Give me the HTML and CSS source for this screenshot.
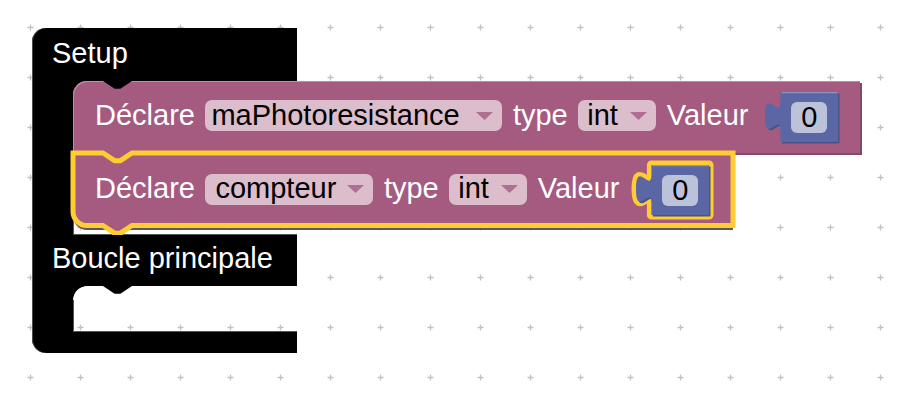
FILE: index.html
```html
<!DOCTYPE html>
<html lang="fr">
<head>
<meta charset="utf-8">
<title>Blocs</title>
<link rel="stylesheet" href="styles.css">
</head>
<body>
<div class="workspace">
  <div class="cblock">
    <div class="chead chead--setup">Setup</div>
    <div class="cinput">
      <div class="spine"></div>
      <div class="stack">
        <div class="block block--first">
          <span class="label">Déclare</span>
          <span class="dropdown dropdown--long"><span>maPhotoresistance</span><svg class="arrow" viewBox="0 0 17 8"><path d="M0 0H17L8.5 8Z"/></svg></span>
          <span class="label">type</span>
          <span class="dropdown dropdown--int"><span>int</span><svg class="arrow" viewBox="0 0 17 8"><path d="M0 0H17L8.5 8Z"/></svg></span>
          <span class="label">Valeur</span>
          <span class="value value--first">
            <svg class="value__shape" viewBox="0 0 75 52">
              <path class="value__dark" transform="translate(1.5 1.5)" d="M15.4 0H73V50H15.4V38.6c0 -19.3 -15.4 15.4 -15.4 -14.5s15.4 4.8 15.4 -14.5Z"/>
              <path class="value__main" d="M15.4 0H73V50H15.4V38.6c0 -19.3 -15.4 15.4 -15.4 -14.5s15.4 4.8 15.4 -14.5Z"/>
              <path class="value__light" d="M16.5 0.6H72.4"/>
            </svg>
            <span class="value__field">0</span>
          </span>
        </div>
        <div class="block block--selected">
          <svg class="selection" viewBox="0 0 660 73">
            <path class="selection__tab" d="M30 72.5l11.6 7.7h5.8l11.6 -7.7Z"/>
            <path class="selection__outline" d="M0 0H30l11.6 7.7h5.8L59 0H660V72.5H59l-11.6 7.7h-5.8L30 72.5H14A14 14 0 0 1 0 58.5Z"/>
          </svg>
          <span class="label">Déclare</span>
          <span class="dropdown dropdown--mid"><span>compteur</span><svg class="arrow" viewBox="0 0 17 8"><path d="M0 0H17L8.5 8Z"/></svg></span>
          <span class="label">type</span>
          <span class="dropdown dropdown--int"><span>int</span><svg class="arrow" viewBox="0 0 17 8"><path d="M0 0H17L8.5 8Z"/></svg></span>
          <span class="label">Valeur</span>
          <span class="value value--selected">
            <svg class="value__shape" viewBox="0 0 75 52">
              <path class="value__socket" d="M15.4 0H73V50H15.4V38.6c0 -19.3 -15.4 15.4 -15.4 -14.5s15.4 4.8 15.4 -14.5Z"/>
              <path class="value__dark" transform="translate(1.5 1.5)" d="M15.4 0H73V50H15.4V38.6c0 -19.3 -15.4 15.4 -15.4 -14.5s15.4 4.8 15.4 -14.5Z"/>
              <path class="value__main" d="M15.4 0H73V50H15.4V38.6c0 -19.3 -15.4 15.4 -15.4 -14.5s15.4 4.8 15.4 -14.5Z"/>
              <path class="value__light" d="M16.5 0.6H72.4"/>
            </svg>
            <span class="value__field">0</span>
          </span>
        </div>
      </div>
    </div>
    <div class="chead chead--loop">Boucle principale</div>
    <div class="cinput">
      <div class="spine"></div>
      <div class="slot"></div>
    </div>
    <div class="cfoot"></div>
  </div>
</div>
</body>
</html>
```
FILE: styles.css
```css
html, body {
  margin: 0;
  padding: 0;
  background: #fff;
}

body {
  font-family: "Liberation Sans", Arial, Helvetica, sans-serif;
}

.workspace {
  position: relative;
  width: 904px;
  height: 414px;
  overflow: hidden;
  background-color: #fff;
  background-image: url("data:image/svg+xml,%3Csvg xmlns='http://www.w3.org/2000/svg' width='50' height='50'%3E%3Cpath d='M22.5 25.5h6M25.5 22.5v6' stroke='%23c2c2c2' stroke-width='1.3'/%3E%3C/svg%3E");
  background-size: 50px 50px;
  background-position: 5px 1.5px;
}

/* ---------- C-shaped container block ---------- */
.cblock {
  position: absolute;
  left: 32px;
  top: 28px;
  width: 265px;
  display: flex;
  flex-direction: column;
}

.chead {
  position: relative;
  z-index: 2;
  box-sizing: border-box;
  background: #000;
  color: #fff;
  font-size: 29px;
  line-height: 33px;
  padding-left: 20px;
  white-space: nowrap;
  box-shadow: inset 1px 0 0 #4d4d4d;
}

.chead::after {
  content: "";
  position: absolute;
  left: 71px;
  top: 100%;
  width: 29px;
  height: 7.7px;
  background: #000;
  clip-path: polygon(0 0, 100% 0, 60% 100%, 40% 100%);
}

.chead--setup {
  height: 53px;
  padding-top: 8.5px;
  border-top-left-radius: 14px;
}

.chead--loop {
  height: 51px;
  padding-top: 6.5px;
}

.cinput {
  display: flex;
}

.spine {
  flex: none;
  width: 41px;
  background: #000;
  box-shadow: inset 1px 0 0 #4d4d4d;
}

.stack,
.slot {
  flex: 1;
  min-width: 0;
  background:
    radial-gradient(circle at 14px 14px, transparent 13.5px, #000 14.2px) left top / 14px 14px no-repeat,
    linear-gradient(#555, #555) left bottom / 100% 1px no-repeat,
    linear-gradient(#555, #555) left bottom / 1px calc(100% - 14px) no-repeat;
}

.stack {
  height: 154px;
  display: flex;
  flex-direction: column;
  align-items: flex-start;
}

.slot {
  height: 46px;
}

.cfoot {
  height: 21px;
  background: #000;
  border-bottom-left-radius: 14px;
  box-shadow: inset 1px 0 0 #4d4d4d;
}

/* ---------- statement blocks ---------- */
.block {
  position: relative;
  flex: none;
  box-sizing: border-box;
  display: flex;
  align-items: center;
  gap: 10.5px;
  padding-left: 22px;
  background: #a55b80;
  color: #fff;
  font-size: 29px;
  line-height: 32px;
  white-space: nowrap;
}

.block--first {
  width: 787px;
  height: 72px;
  padding-bottom: 3px;
  border-top-left-radius: 14px;
  box-shadow: inset 1px 1px 0 #c08ca6, 2px 2px 0 #844966;
}

.block--selected {
  width: 660px;
  height: 72.5px;
  border-bottom-left-radius: 14px;
  box-shadow: 0 4px 0 #5a5a5a;
}

.selection {
  position: absolute;
  left: 0;
  top: 0;
  width: 660px;
  height: 73px;
  overflow: visible;
  pointer-events: none;
}

.selection__tab {
  fill: #a55b80;
}

.selection__outline {
  fill: none;
  stroke: #fc3;
  stroke-width: 5;
}

.label {
  padding-bottom: 2px;
}

/* ---------- dropdown fields ---------- */
.dropdown {
  display: inline-flex;
  align-items: center;
  justify-content: space-between;
  box-sizing: border-box;
  height: 31px;
  padding: 0 9px 2px 6px;
  border-radius: 7px;
  background: rgba(255, 255, 255, 0.6);
  color: #000;
}

.dropdown--long {
  width: 297px;
}

.dropdown--mid {
  width: 168px;
  padding-left: 10px;
}

.dropdown--int {
  width: 78px;
  padding-left: 9px;
}

.arrow {
  width: 17px;
  height: 8px;
  margin-top: 2px;
  fill: #b06e92;
}

/* ---------- value (number) blocks ---------- */
.value {
  position: relative;
  flex: none;
  box-sizing: border-box;
  width: 75px;
  height: 52px;
  margin-left: 6px;
  padding: 10px 0 0 26px;
  display: flex;
  align-items: flex-start;
}

.value--first {
  margin-top: 5px;
}

.value--selected {
  margin-top: 2.5px;
}

.value__shape {
  position: absolute;
  left: 0;
  top: 0;
  width: 75px;
  height: 52px;
  overflow: visible;
}

.value__socket {
  fill: #fc3;
  stroke: #fc3;
  stroke-width: 9;
  stroke-linejoin: round;
}

.value__dark {
  fill: #495284;
}

.value__main {
  fill: #5b67a5;
}

.value__light {
  fill: none;
  stroke: #8c95c0;
  stroke-width: 1.2;
}

.value__field {
  position: relative;
  width: 36.5px;
  height: 31px;
  border-radius: 6px;
  background: #bdc2db;
  color: #000;
  font-size: 29px;
  line-height: 31px;
  text-align: center;
}
```
